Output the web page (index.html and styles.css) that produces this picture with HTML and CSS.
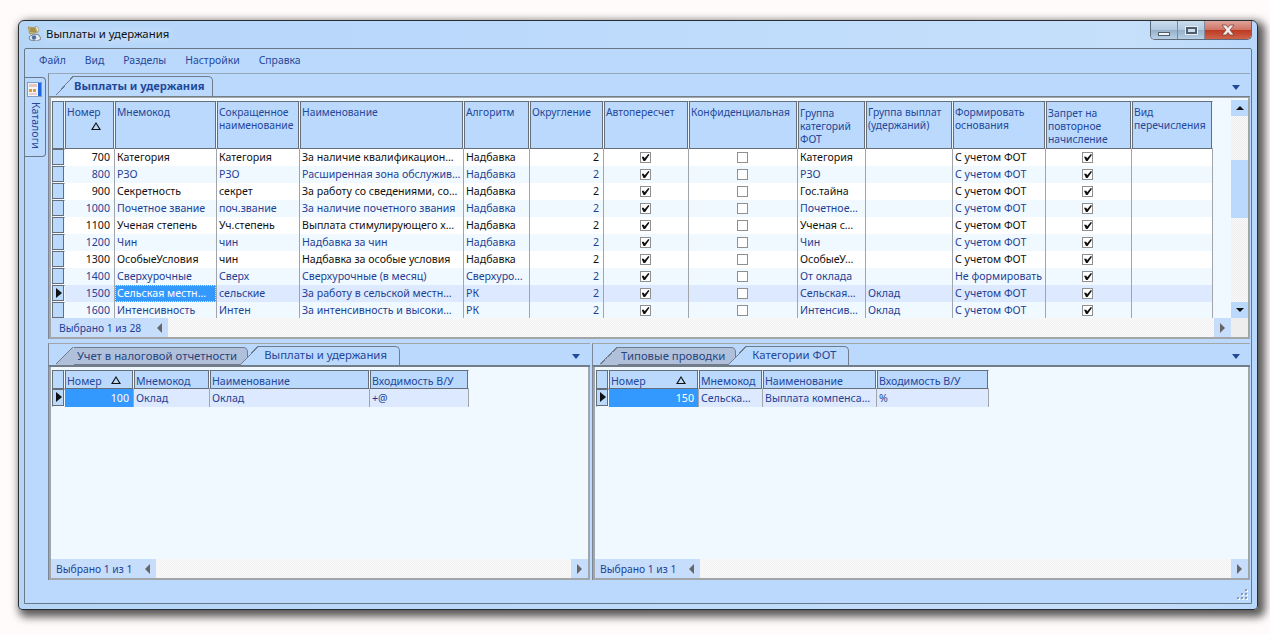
FILE: index.html
```html
<!DOCTYPE html>
<html>
<head>
    <title>Выплаты и удержания</title>
    <link rel="stylesheet" href="styles.css">
</head>
<body>

<div class="window">
    <div class="titlebar">
        <svg class="app-icon" width="14" height="15" viewBox="0 0 14 15">
            <path d="M1 1l8 1 2 4-8 2z" fill="#cdb765" stroke="#94803a" stroke-width=".6"/>
            <path d="M3 3h5M3 5h6" stroke="#6d5c1c" stroke-width=".8"/>
            <path d="M8 0l3 1 1 4-2 1z" fill="#efe6c8" stroke="#8a8268" stroke-width=".5"/>
            <path d="M7 8l5 1 2 4-4 2-7-1-1-3z" fill="#e4ebf3" stroke="#56606c" stroke-width=".7"/>
            <circle cx="7" cy="11.500" r="2.200" fill="#4d6f9f"/>
        </svg>
        <span class="title-text">Выплаты и удержания</span>
        <div class="winbtns">
            <div class="winbtn"><span class="min-glyph"></span></div>
            <div class="winbtn"><span class="max-glyph"></span></div>
            <div class="winbtn close"><svg width="16" height="12" viewBox="0 0 16 12"><path d="M2 1h4l2 2.500 2-2.500h4l-4 5 4 5h-4l-2-2.500-2 2.500h-4l4-5z" fill="#f4ecec" stroke="#6b3a34" stroke-width=".7"/></svg></div>
        </div>
    </div>

    <div class="client">
        <div class="menu">
            <span>Файл</span><span>Вид</span><span>Разделы</span><span>Настройки</span><span>Справка</span>
        </div>

        <div class="workspace">
            <div class="side">
                <div class="side-tab">
                    <svg width="15" height="15" viewBox="0 0 15 15">
                        <rect x=".5" y=".5" width="14" height="14" fill="#f2f6fb" stroke="#7f9cc4"/>
                        <rect x="11" y="1" width="3" height="13" fill="#1f66e0"/>
                        <rect x="2" y="2" width="8" height="3" fill="#e9c6bc"/>
                        <rect x="2" y="7" width="3" height="3" fill="#e09a3a"/>
                        <rect x="6" y="7" width="3" height="3" fill="#e09a3a"/>
                        <path d="M2 12h8" stroke="#d9a89a"/>
                    </svg>
                    <span class="side-label">Каталоги</span>
                </div>
            </div>

            <div class="panes">
                <div class="pane pane-top">
                    <div class="tabs">
                        <div class="tab active bold"><i class="slant"></i>Выплаты и удержания</div>
                        <span class="tabs-arrow"></span>
                    </div>
                    <div class="grid-box">
                        <div class="grid-scroll">
                            <div class="grid-main">
                                <table class="grid big">
                                    <colgroup><col><col><col><col><col><col><col><col><col><col><col><col><col><col></colgroup>
                                    <thead>
                                        <tr>
                                            <th class="ind"></th>
                                            <th>Номер<i class="sort-under"></i></th>
                                            <th>Мнемокод</th>
                                            <th>Сокращенное наименование</th>
                                            <th>Наименование</th>
                                            <th>Алгоритм</th>
                                            <th>Округление</th>
                                            <th>Автопересчет</th>
                                            <th>Конфиденциальная</th>
                                            <th class="low">Группа категорий ФОТ</th>
                                            <th>Группа выплат (удержаний)</th>
                                            <th>Формировать основания</th>
                                            <th class="low">Запрет на повторное начисление</th>
                                            <th>Вид перечисления</th>
                                        </tr>
                                    </thead>
                                    <tbody>
                                        <tr class="white-row"><td class="ind"></td><td class="num">700</td><td>Категория</td><td>Категория</td><td>За наличие квалификацион…</td><td>Надбавка</td><td class="num">2</td><td class="chk"><i class="box on"></i></td><td class="chk"><i class="box"></i></td><td>Категория</td><td></td><td>С учетом ФОТ</td><td class="chk"><i class="box on"></i></td><td></td></tr>
                                        <tr class="alt"><td class="ind"></td><td class="num">800</td><td>РЗО</td><td>РЗО</td><td>Расширенная зона обслужив…</td><td>Надбавка</td><td class="num">2</td><td class="chk"><i class="box on"></i></td><td class="chk"><i class="box"></i></td><td>РЗО</td><td></td><td>С учетом ФОТ</td><td class="chk"><i class="box on"></i></td><td></td></tr>
                                        <tr class="white-row"><td class="ind"></td><td class="num">900</td><td>Секретность</td><td>секрет</td><td>За работу со сведениями, со…</td><td>Надбавка</td><td class="num">2</td><td class="chk"><i class="box on"></i></td><td class="chk"><i class="box"></i></td><td>Гос.тайна</td><td></td><td>С учетом ФОТ</td><td class="chk"><i class="box on"></i></td><td></td></tr>
                                        <tr class="alt"><td class="ind"></td><td class="num">1000</td><td>Почетное звание</td><td>поч.звание</td><td>За наличие почетного звания</td><td>Надбавка</td><td class="num">2</td><td class="chk"><i class="box on"></i></td><td class="chk"><i class="box"></i></td><td>Почетное…</td><td></td><td>С учетом ФОТ</td><td class="chk"><i class="box on"></i></td><td></td></tr>
                                        <tr class="white-row"><td class="ind"></td><td class="num">1100</td><td>Ученая степень</td><td>Уч.степень</td><td>Выплата стимулирующего х…</td><td>Надбавка</td><td class="num">2</td><td class="chk"><i class="box on"></i></td><td class="chk"><i class="box"></i></td><td>Ученая с…</td><td></td><td>С учетом ФОТ</td><td class="chk"><i class="box on"></i></td><td></td></tr>
                                        <tr class="alt"><td class="ind"></td><td class="num">1200</td><td>Чин</td><td>чин</td><td>Надбавка за чин</td><td>Надбавка</td><td class="num">2</td><td class="chk"><i class="box on"></i></td><td class="chk"><i class="box"></i></td><td>Чин</td><td></td><td>С учетом ФОТ</td><td class="chk"><i class="box on"></i></td><td></td></tr>
                                        <tr class="white-row"><td class="ind"></td><td class="num">1300</td><td>ОсобыеУсловия</td><td>чин</td><td>Надбавка за особые условия</td><td>Надбавка</td><td class="num">2</td><td class="chk"><i class="box on"></i></td><td class="chk"><i class="box"></i></td><td>ОсобыеУ…</td><td></td><td>С учетом ФОТ</td><td class="chk"><i class="box on"></i></td><td></td></tr>
                                        <tr class="alt"><td class="ind"></td><td class="num">1400</td><td>Сверхурочные</td><td>Сверх</td><td>Сверхурочные (в месяц)</td><td>Сверхуро…</td><td class="num">2</td><td class="chk"><i class="box on"></i></td><td class="chk"><i class="box"></i></td><td>От оклада</td><td></td><td>Не формировать</td><td class="chk"><i class="box on"></i></td><td></td></tr>
                                        <tr class="cur"><td class="ind"><i class="marker"></i></td><td class="num">1500</td><td class="focus"><span>Сельская местн…</span></td><td>сельские</td><td>За работу в сельской местн…</td><td>РК</td><td class="num">2</td><td class="chk"><i class="box on"></i></td><td class="chk"><i class="box"></i></td><td>Сельская…</td><td>Оклад</td><td>С учетом ФОТ</td><td class="chk"><i class="box on"></i></td><td></td></tr>
                                        <tr class="alt"><td class="ind"></td><td class="num">1600</td><td>Интенсивность</td><td>Интен</td><td>За интенсивность и высоки…</td><td>РК</td><td class="num">2</td><td class="chk"><i class="box on"></i></td><td class="chk"><i class="box"></i></td><td>Интенсив…</td><td>Оклад</td><td>С учетом ФОТ</td><td class="chk"><i class="box on"></i></td><td></td></tr>
                                    </tbody>
                                </table>
                            </div>
                            <div class="vscroll">
                                <div class="sbtn"><i class="arr up"></i></div>
                                <div class="vtrack"><div class="vthumb"></div></div>
                                <div class="sbtn"><i class="arr down"></i></div>
                            </div>
                        </div>
                        <div class="status">
                            <div class="status-label wide">Выбрано 1 из 28<i class="arr left"></i></div>
                            <div class="htrack"></div>
                            <div class="sbtn-h"><i class="arr right"></i></div>
                            <div class="corner"></div>
                        </div>
                    </div>
                </div>

                <div class="bottom">
                    <div class="pane pane-left">
                        <div class="tabs small">
                            <div class="tab back"><i class="slant"></i>Учет в налоговой отчетности</div>
                            <div class="tab active"><i class="slant"></i>Выплаты и удержания</div>
                            <span class="tabs-arrow"></span>
                        </div>
                        <div class="grid-box sub">
                            <div class="grid-main">
                                <table class="grid left-grid">
                                    <colgroup><col><col><col><col><col></colgroup>
                                    <thead><tr><th class="ind"></th><th class="sorted">Номер<i class="sort-side"></i></th><th>Мнемокод</th><th>Наименование</th><th>Входимость В/У</th></tr></thead>
                                    <tbody><tr class="cur"><td class="ind"><i class="marker"></i></td><td class="num picked">100</td><td>Оклад</td><td>Оклад</td><td>+@</td></tr></tbody>
                                </table>
                            </div>
                            <div class="status">
                                <div class="status-label">Выбрано 1 из 1<i class="arr left"></i></div>
                                <div class="htrack"></div>
                                <div class="sbtn-h"><i class="arr right"></i></div>
                            </div>
                        </div>
                    </div>

                    <div class="pane pane-right">
                        <div class="tabs small">
                            <div class="tab back"><i class="slant"></i>Типовые проводки</div>
                            <div class="tab active"><i class="slant"></i>Категории ФОТ</div>
                            <span class="tabs-arrow"></span>
                        </div>
                        <div class="grid-box sub">
                            <div class="grid-main">
                                <table class="grid right-grid">
                                    <colgroup><col><col><col><col><col></colgroup>
                                    <thead><tr><th class="ind"></th><th class="sorted">Номер<i class="sort-side"></i></th><th>Мнемокод</th><th>Наименование</th><th>Входимость В/У</th></tr></thead>
                                    <tbody><tr class="cur"><td class="ind"><i class="marker"></i></td><td class="num picked">150</td><td>Сельска…</td><td>Выплата компенса…</td><td>%</td></tr></tbody>
                                </table>
                            </div>
                            <div class="status">
                                <div class="status-label">Выбрано 1 из 1<i class="arr left"></i></div>
                                <div class="htrack"></div>
                                <div class="sbtn-h"><i class="arr right"></i></div>
                            </div>
                        </div>
                    </div>
                </div>
            </div>
        </div>

        <div class="footer">
            <svg class="grip" width="12" height="12" viewBox="0 0 12 12">
                <path d="M9 1h2v2h-2zM5 5h2v2h-2zM9 5h2v2h-2zM1 9h2v2h-2zM5 9h2v2h-2zM9 9h2v2h-2z" fill="#f7fafd"/>
                <path d="M8 0h2v2h-2zM4 4h2v2h-2zM8 4h2v2h-2zM0 8h2v2h-2zM4 8h2v2h-2zM8 8h2v2h-2z" fill="#8c9aab"/>
            </svg>
        </div>
    </div>
</div>

</body>
</html>
```

FILE: styles.css
```css
html, body {
    margin: 0;
    height: 100%;
    overflow: hidden;
}

body {
    background: #fefbfa;
    font-family: "Noto Sans", sans-serif;
    font-size: 10.6px;
    color: #1f3f95;
    padding: 20px 12px 0 18px;
    box-sizing: border-box;
}

.window {
    width: 1240px;
    height: 590px;
    box-sizing: border-box;
    border: 1px solid #2a2e33;
    border-radius: 6px 6px 4px 4px;
    background: linear-gradient(to right, #b6d6f8, #b9d8fb 30%, #c6e0fb 90%, #b8d7fb);
    box-shadow: 4px 4px 9px 3px rgba(0, 0, 0, 0.65);
    padding: 0 5px 5px;
    display: flex;
    flex-direction: column;
}

.titlebar {
    height: 27px;
    box-sizing: border-box;
    padding: 0 0 2px 3px;
    flex: none;
    display: flex;
    align-items: center;
}

.app-icon {
    margin-right: 5px;
}

.title-text {
    color: #111;
    font-size: 11.4px;
    text-shadow: 0 0 8px #eef6ff;
}

.winbtns {
    margin-left: auto;
    align-self: flex-start;
    display: flex;
    height: 18px;
    border: 1px solid #5d6a79;
    border-top: none;
    border-radius: 0 0 5px 5px;
    overflow: hidden;
}

.winbtn {
    width: 26px;
    display: flex;
    align-items: center;
    justify-content: center;
    border-right: 1px solid #7c8b9c;
    background: linear-gradient(to bottom, #c8dcee, #b1c8de 50%, #97b1ca 52%, #b7cfe4);
}

.winbtn.close {
    width: 46px;
    border-right: none;
    background: linear-gradient(to bottom, #dfa49b, #cf7464 48%, #bd3a22 52%, #d0634c);
}

.min-glyph {
    width: 10px;
    height: 2px;
    margin-top: 7px;
    background: #f2f5f8;
    border: 1px solid #4f5d6c;
}

.max-glyph {
    width: 7px;
    height: 3px;
    border: 2px solid #4f5d6c;
    outline: 1px solid #e6edf4;
    background: #cfdeed;
}

.client {
    flex: 1;
    min-height: 0;
    border: 1px solid #6a7786;
    border-radius: 2px 2px 0 0;
    background: #bbd9fd;
    display: flex;
    flex-direction: column;
}

.menu {
    height: 24px;
    box-sizing: border-box;
    padding: 0 0 2px 14px;
    flex: none;
    display: flex;
    align-items: center;
    gap: 19px;
    color: #23479a;
    font-size: 10.4px;
}

.workspace {
    flex: 1;
    min-height: 0;
    display: flex;
}

.side {
    width: 23px;
    flex: none;
    padding-top: 4px;
}

.side-tab {
    width: 21px;
    height: 80px;
    box-sizing: border-box;
    border: 1px solid #6a7786;
    border-left: none;
    border-radius: 0 4px 4px 0;
    padding: 4px 0 0 2px;
    background: #bbd9fd;
}

.side-tab svg {
    display: block;
}

.side-label {
    display: block;
    writing-mode: vertical-rl;
    margin: 5px 0 0 2px;
    color: #23479a;
}

.panes {
    flex: 1;
    min-width: 0;
    display: flex;
    flex-direction: column;
    margin-right: 1px;
}

.pane {
    display: flex;
    flex-direction: column;
    min-height: 0;
}

.pane-top {
    height: 265px;
    flex: none;
    border-left: 1px solid #7b8796;
    border-top: 1px solid #9aa7b6;
}

.tabs {
    height: 23px;
    flex: none;
    display: flex;
    align-items: flex-end;
    border-bottom: 1px solid #737d88;
    padding-left: 5px;
    box-sizing: border-box;
}

.tabs.small {
    height: 23px;
    border-bottom: 2px solid #737d88;
}

.tab {
    height: 19px;
    position: relative;
    box-sizing: border-box;
    border: 1px solid #6f7c8c;
    border-left: none;
    border-bottom: none;
    border-radius: 0 5px 0 0;
    margin-left: 11px;
    padding: 0 12px 3px 5px;
    display: flex;
    align-items: center;
    color: #23479a;
    white-space: nowrap;
    background: #bbd9fd;
    font-size: 11.35px;
}

.tab.bold {
    font-weight: 700;
    font-size: 11.2px;
    color: #1f4a98;
    height: 20px;
    margin-left: 20px;
    padding: 0 8px 2px 0;
}

.tab.back {
    background: #b1c0da;
    border-bottom: 1px solid #6f7c8c;
    height: 18px;
    margin-left: 20px;
    padding: 0 10px 2px 3px;
    color: #27457f;
}

.tab.active {
    z-index: 1;
}

.slant {
    position: absolute;
    left: -18px;
    top: -1px;
    bottom: 0;
    width: 18px;
    background: linear-gradient(to bottom right, transparent calc(50% - 1px), #6f7c8c calc(50% - 1px), #6f7c8c 50%, #bbd9fd 50%);
}

.tab.back .slant {
    bottom: -1px;
    background: linear-gradient(to bottom right, transparent calc(50% - 1px), #6f7c8c calc(50% - 1px), #6f7c8c 50%, #b1c0da 50%);
}

.tabs-arrow {
    margin: 0 10px 6px auto;
    width: 0;
    height: 0;
    border: 4px solid transparent;
    border-top: 5px solid #1f4a98;
    border-bottom: none;
}

.grid-box {
    flex: 1;
    min-height: 0;
    border: 2px solid #a3a6a9;
    border-top-width: 1px;
    display: flex;
    flex-direction: column;
    background: #eff9ff;
}

.grid-box.sub {
    border-top: none;
}

.grid-scroll {
    flex: 1;
    min-height: 0;
    display: flex;
}

.grid-main {
    flex: 1;
    min-width: 0;
    min-height: 0;
    overflow: hidden;
    padding-top: 3px;
    background: #eff9ff;
}

.grid {
    border-collapse: separate;
    border-spacing: 0;
    table-layout: fixed;
    margin-left: 1px;
}

.big { width: 1161px; }
.big col:nth-child(1) { width: 13px; }
.big col:nth-child(2) { width: 50px; }
.big col:nth-child(3) { width: 102px; }
.big col:nth-child(4) { width: 83px; }
.big col:nth-child(5) { width: 164px; }
.big col:nth-child(6) { width: 66px; }
.big col:nth-child(7) { width: 74px; }
.big col:nth-child(8) { width: 85px; }
.big col:nth-child(9) { width: 109px; }
.big col:nth-child(10) { width: 68px; }
.big col:nth-child(11) { width: 87px; }
.big col:nth-child(12) { width: 93px; }
.big col:nth-child(13) { width: 86px; }
.big col:nth-child(14) { width: 81px; }

.left-grid { width: 417px; }
.left-grid col:nth-child(1) { width: 13px; }
.left-grid col:nth-child(2) { width: 69px; }
.left-grid col:nth-child(3) { width: 76px; }
.left-grid col:nth-child(4) { width: 160px; }
.left-grid col:nth-child(5) { width: 99px; }

.right-grid { width: 393px; }
.right-grid col:nth-child(1) { width: 13px; }
.right-grid col:nth-child(2) { width: 90px; }
.right-grid col:nth-child(3) { width: 64px; }
.right-grid col:nth-child(4) { width: 114px; }
.right-grid col:nth-child(5) { width: 112px; }

.grid th {
    box-sizing: border-box;
    height: 19px;
    padding: 3px 2px 0 1px;
    text-align: left;
    vertical-align: middle;
    font-weight: 400;
    line-height: 13px;
    color: #23479a;
    background: #bbd9fd;
    border: 1px solid #666f79;
    border-right-color: #eff9ff;
    box-shadow: inset -1px 0 0 #666f79;
    position: relative;
    overflow: hidden;
}

.grid.big th {
    height: 48px;
    vertical-align: top;
    padding-top: 4px;
    font-size: 10.3px;
}

.grid.big th.low {
    padding-top: 5px;
}

.grid td {
    box-sizing: border-box;
    height: 18px;
    padding: 0 4px 0 2px;
    line-height: 15px;
    white-space: nowrap;
    overflow: hidden;
    border-right: 1px solid #a0a5aa;
    color: #1f3f95;
}

.grid.big td {
    height: 17px;
}

.grid th.ind,
.grid td.ind {
    background: #bbd9fd;
    padding: 0;
    position: relative;
}

.grid td.ind {
    border: 1px solid #666f79;
    border-right-color: #eff9ff;
    border-bottom-color: #eff9ff;
    box-shadow: inset -1px 0 0 #666f79, inset 0 -1px 0 #666f79;
}

.white-row td {
    background: #fff;
    color: #111;
}

.alt td {
    background: #eff9ff;
}

.cur td {
    background: #dce9fe;
}

.grid td.num {
    text-align: right;
}

.grid td.chk {
    text-align: center;
    padding: 0 2px 0 0;
}

.box {
    display: inline-block;
    width: 11px;
    height: 11px;
    box-sizing: border-box;
    border: 1px solid #8f8f8f;
    background: #fff;
    vertical-align: -2px;
    position: relative;
}

.box.on::after {
    content: "";
    position: absolute;
    left: 1px;
    top: 1px;
    width: 8px;
    height: 7px;
    background: #111;
    clip-path: polygon(0 40%, 28% 40%, 40% 62%, 85% 0, 100% 12%, 45% 100%, 25% 100%);
}

.marker {
    position: absolute;
    left: 3px;
    top: 2px;
    width: 0;
    height: 0;
    border: 5px solid transparent;
    border-left: 6px solid #111;
    border-right: none;
}

.grid td.focus {
    padding: 0;
    background: #3399ff;
}

.focus span {
    display: block;
    height: 15px;
    margin: 0 1px;
    padding-left: 1px;
    color: #fff;
    outline: 1px dotted #cfe6ff;
    overflow: hidden;
}

.grid td.picked {
    background: #3399ff;
    color: #fff;
}

.sort-under {
    display: block;
    width: 0;
    height: 0;
    margin: 3px 0 0 24px;
    border: 5px solid transparent;
    border-bottom: 8px solid #111;
    border-top: none;
    position: relative;
}

.sort-under::after,
.sort-side::after {
    content: "";
    position: absolute;
    left: -3px;
    top: 2px;
    width: 0;
    height: 0;
    border: 3px solid transparent;
    border-bottom: 5px solid #bbd9fd;
    border-top: none;
}

.sort-side {
    position: absolute;
    right: 12px;
    top: 5px;
    width: 0;
    height: 0;
    border: 5px solid transparent;
    border-bottom: 8px solid #111;
    border-top: none;
}

.vscroll {
    width: 17px;
    flex: none;
    margin-top: 2px;
    display: flex;
    flex-direction: column;
}

.sbtn {
    height: 16px;
    background: #bbd9fd;
    display: flex;
    align-items: center;
    justify-content: center;
    flex: none;
}

.vtrack {
    flex: 1;
    padding-top: 44px;
    background: repeating-conic-gradient(#ececec 0 25%, #fafafa 0 50%) 0 0 / 2px 2px;
}

.vthumb {
    height: 58px;
    background: #bbd9fd;
}

.arr {
    display: block;
    width: 0;
    height: 0;
    border: 4px solid transparent;
}

.arr.up {
    border-top: none;
    border-bottom: 4px solid #111;
}

.arr.down {
    border-bottom: none;
    border-top: 4px solid #111;
}

.arr.left {
    border: 5px solid transparent;
    border-left: none;
    border-right: 5px solid #666;
    margin: 0 6px 0 auto;
}

.arr.right {
    border: 5px solid transparent;
    border-right: none;
    border-left: 5px solid #666;
}

.status {
    height: 19px;
    flex: none;
    display: flex;
}

.status-label {
    display: flex;
    align-items: center;
    background: #c6defc;
    padding: 0 0 0 5px;
    width: 105px;
    box-sizing: border-box;
    color: #1f3f95;
    white-space: nowrap;
    font-size: 10.3px;
}

.status-label.wide {
    width: 117px;
    padding-left: 8px;
}

.htrack {
    flex: 1;
    background: repeating-conic-gradient(#f0f0f0 0 25%, #fbfbfb 0 50%) 0 0 / 2px 2px;
}

.sbtn-h {
    width: 17px;
    background: #c6defc;
    display: flex;
    align-items: center;
    justify-content: center;
}

.corner {
    width: 17px;
    background: #eeeeee;
}

.bottom {
    flex: 1;
    min-height: 0;
    margin-top: 4px;
    display: flex;
    gap: 2px;
}

.pane-left {
    width: 541px;
    flex: none;
    border-left: 1px solid #7b8796;
    border-top: 1px solid #a3a6a9;
}

.pane-right {
    flex: 1;
    min-width: 0;
    border-left: 1px solid #7b8796;
    border-top: 1px solid #a3a6a9;
}

.footer {
    height: 23px;
    flex: none;
    position: relative;
}

.grip {
    position: absolute;
    right: 2px;
    bottom: 2px;
}
```
